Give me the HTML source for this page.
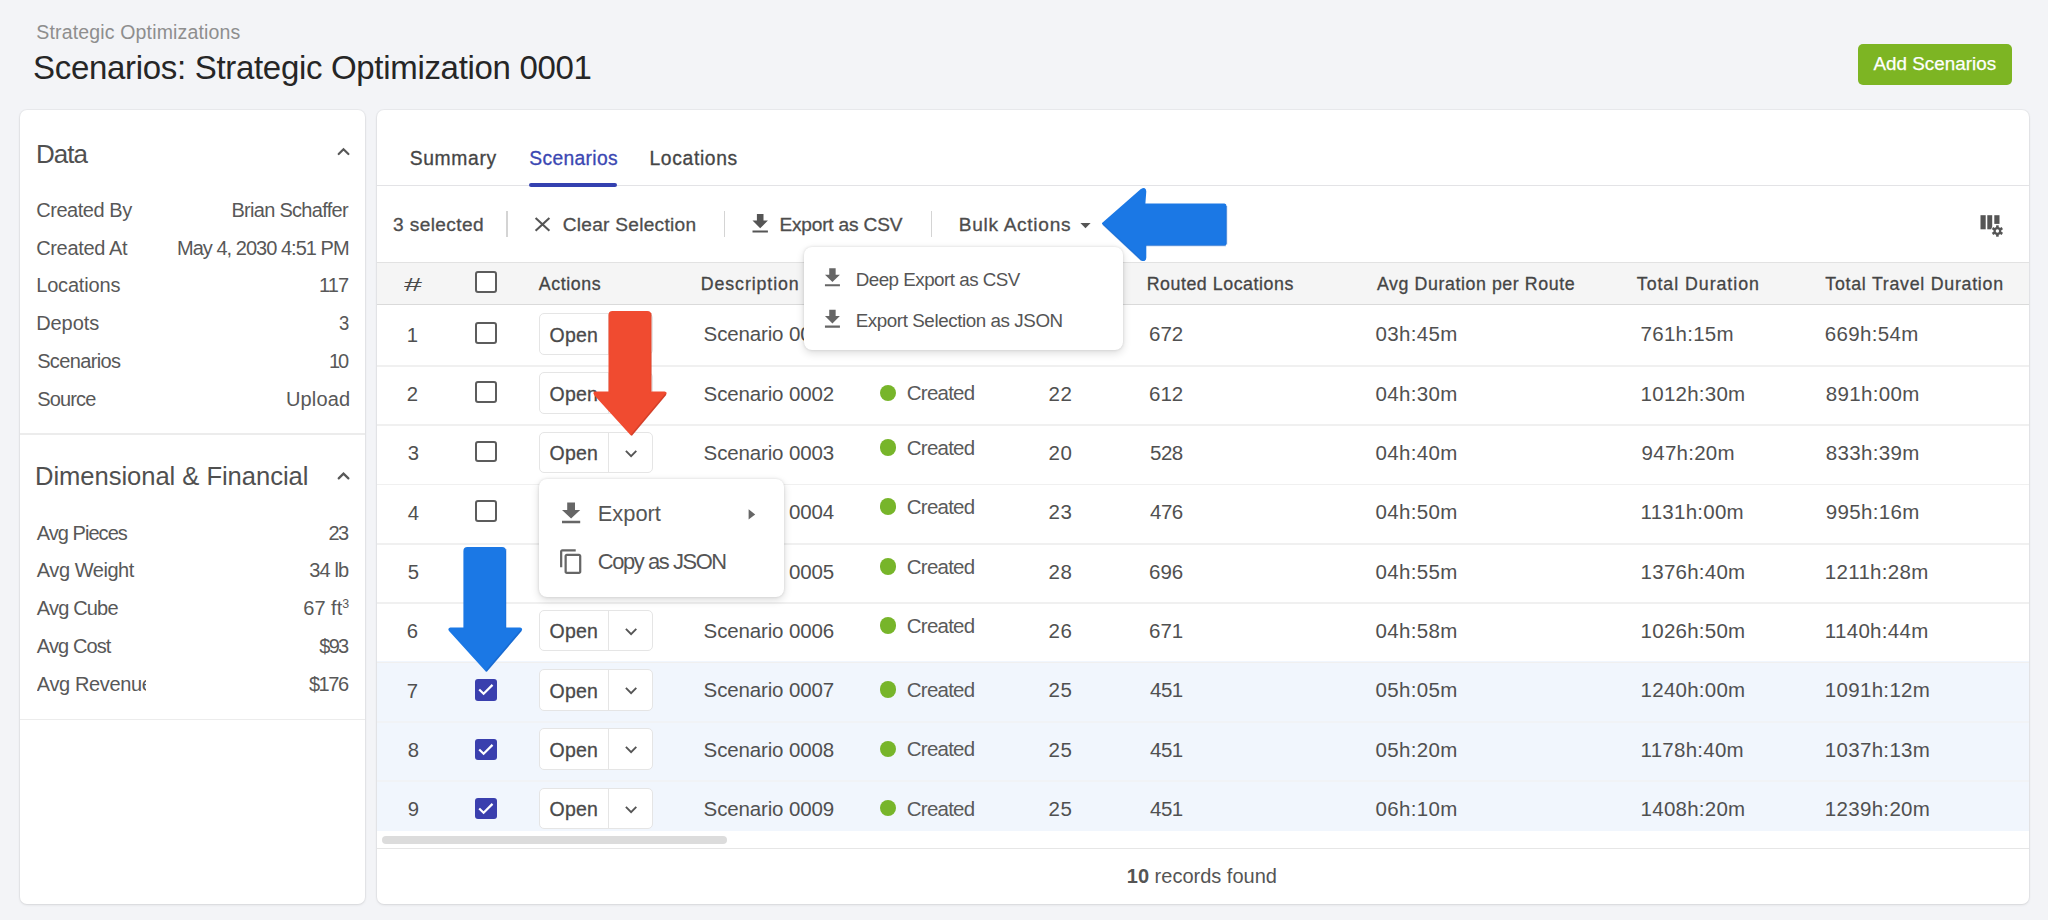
<!DOCTYPE html>
<html><head><meta charset="utf-8"><title>Scenarios</title>
<style>
html,body{margin:0;padding:0;}
body{width:2048px;height:920px;overflow:hidden;position:relative;background:#f3f4f7;font-family:"Liberation Sans",sans-serif;}
.a{position:absolute;box-sizing:border-box;}
.t{position:absolute;white-space:nowrap;line-height:1;font-family:"Liberation Sans",sans-serif;}
.cb{position:absolute;box-sizing:border-box;width:21.5px;height:21.5px;border:2.1px solid #5c5c5c;border-radius:3px;background:#fff;}
.cbk{position:absolute;box-sizing:border-box;width:21.3px;height:21.3px;border-radius:3px;background:#3a3fae;}
.btn{position:absolute;box-sizing:border-box;width:114px;height:41.6px;border:1px solid #e5e5e5;border-radius:5px;background:#fff;}
.btn:after{content:"";position:absolute;left:68.2px;top:0;bottom:0;width:1px;background:#e5e5e5;}
.dot{position:absolute;width:16.4px;height:16.4px;border-radius:50%;background:#77b52a;}
sup{font-size:0.62em;vertical-align:0;position:relative;top:-0.55em;}
</style></head><body>

<div class="a" style="left:1857.6px;top:43.8px;width:154px;height:41px;border-radius:5px;background:#7db523;"></div>
<div class="a" style="left:19.6px;top:109.8px;width:345.8px;height:794px;border-radius:7px;background:#fff;box-shadow:0 0 0 1px rgba(0,0,0,0.035),0 1px 3px rgba(0,0,0,0.09);"></div>
<div class="a" style="left:377px;top:109.8px;width:1652px;height:794px;border-radius:7px;background:#fff;box-shadow:0 0 0 1px rgba(0,0,0,0.035),0 1px 3px rgba(0,0,0,0.09);"></div>
<div class="a" style="left:20px;top:433.3px;width:345px;height:1.3px;background:#ececec;"></div>
<div class="a" style="left:20px;top:718.6px;width:345px;height:1.3px;background:#ececec;"></div>
<div class="a" style="left:377px;top:184.8px;width:1652px;height:1.2px;background:#e3e3e6;"></div>
<div class="a" style="left:529.2px;top:182.9px;width:88px;height:4px;border-radius:2px;background:#3441b0;"></div>
<div class="a" style="left:506.2px;top:211px;width:1.4px;height:26px;background:#d4d4d4;"></div>
<div class="a" style="left:723.6px;top:211px;width:1.4px;height:26px;background:#d4d4d4;"></div>
<div class="a" style="left:930.7px;top:211px;width:1.4px;height:26px;background:#d4d4d4;"></div>
<div class="a" style="left:377px;top:261.6px;width:1652px;height:43px;background:#f5f5f5;border-top:1.2px solid #e2e2e2;border-bottom:1.5px solid #dadada;"></div>
<div class="a" style="left:377px;top:661.4px;width:1652px;height:170px;background:#f1f6fd;"></div>
<div class="a" style="left:377px;top:364.90px;width:1652px;height:1.8px;background:#f0f0f0;"></div>
<div class="a" style="left:377px;top:424.23px;width:1652px;height:1.8px;background:#f0f0f0;"></div>
<div class="a" style="left:377px;top:483.56px;width:1652px;height:1.8px;background:#f0f0f0;"></div>
<div class="a" style="left:377px;top:542.89px;width:1652px;height:1.8px;background:#f0f0f0;"></div>
<div class="a" style="left:377px;top:602.22px;width:1652px;height:1.8px;background:#f0f0f0;"></div>
<div class="a" style="left:377px;top:661.55px;width:1652px;height:1.8px;background:#f0f0f0;"></div>
<div class="a" style="left:377px;top:720.88px;width:1652px;height:1.8px;background:#f1f3f6;"></div>
<div class="a" style="left:377px;top:780.21px;width:1652px;height:1.8px;background:#f1f3f6;"></div>
<div class="a" style="left:382px;top:835.5px;width:345px;height:8px;border-radius:4px;background:#dcdcdc;"></div>
<div class="a" style="left:377px;top:847.8px;width:1652px;height:1.2px;background:#e6e6e6;"></div>
<div class="cb" style="left:475.3px;top:271.1px;"></div>
<div class="cb" style="left:475.3px;top:322.14px;"></div>
<div class="btn" style="left:538.6px;top:313.14px;"><svg width="30" height="20" style="position:absolute;left:79px;top:10px"><polyline points="6.9,7.9 12.1,13.1 17.3,7.9" fill="none" stroke="#555" stroke-width="1.9"/></svg></div>
<div class="cb" style="left:475.3px;top:381.47px;"></div>
<div class="btn" style="left:538.6px;top:372.47px;"><svg width="30" height="20" style="position:absolute;left:79px;top:10px"><polyline points="6.9,7.9 12.1,13.1 17.3,7.9" fill="none" stroke="#555" stroke-width="1.9"/></svg></div>
<div class="dot" style="left:879.9px;top:384.63px;"></div>
<div class="cb" style="left:475.3px;top:440.80px;"></div>
<div class="btn" style="left:538.6px;top:431.80px;"><svg width="30" height="20" style="position:absolute;left:79px;top:10px"><polyline points="6.9,7.9 12.1,13.1 17.3,7.9" fill="none" stroke="#555" stroke-width="1.9"/></svg></div>
<div class="dot" style="left:879.9px;top:439.16px;"></div>
<div class="cb" style="left:475.3px;top:500.13px;"></div>
<div class="dot" style="left:879.9px;top:498.49px;"></div>
<div class="cb" style="left:475.3px;top:559.46px;"></div>
<div class="dot" style="left:879.9px;top:558.32px;"></div>
<div class="cb" style="left:475.3px;top:618.79px;"></div>
<div class="btn" style="left:538.6px;top:609.79px;"><svg width="30" height="20" style="position:absolute;left:79px;top:10px"><polyline points="6.9,7.9 12.1,13.1 17.3,7.9" fill="none" stroke="#555" stroke-width="1.9"/></svg></div>
<div class="dot" style="left:879.9px;top:617.45px;"></div>
<div class="cbk" style="left:475.3px;top:679.22px;"><svg width="21.3" height="21.3" style="position:absolute;left:0;top:0"><polyline points="4.2,10.5 8.6,14.8 17.5,5.9" fill="none" stroke="#fff" stroke-width="2.2"/></svg></div>
<div class="btn" style="left:538.6px;top:669.12px;"><svg width="30" height="20" style="position:absolute;left:79px;top:10px"><polyline points="6.9,7.9 12.1,13.1 17.3,7.9" fill="none" stroke="#555" stroke-width="1.9"/></svg></div>
<div class="dot" style="left:879.9px;top:681.28px;"></div>
<div class="cbk" style="left:475.3px;top:738.55px;"><svg width="21.3" height="21.3" style="position:absolute;left:0;top:0"><polyline points="4.2,10.5 8.6,14.8 17.5,5.9" fill="none" stroke="#fff" stroke-width="2.2"/></svg></div>
<div class="btn" style="left:538.6px;top:728.45px;"><svg width="30" height="20" style="position:absolute;left:79px;top:10px"><polyline points="6.9,7.9 12.1,13.1 17.3,7.9" fill="none" stroke="#555" stroke-width="1.9"/></svg></div>
<div class="dot" style="left:879.9px;top:740.61px;"></div>
<div class="cbk" style="left:475.3px;top:797.88px;"><svg width="21.3" height="21.3" style="position:absolute;left:0;top:0"><polyline points="4.2,10.5 8.6,14.8 17.5,5.9" fill="none" stroke="#fff" stroke-width="2.2"/></svg></div>
<div class="btn" style="left:538.6px;top:787.78px;"><svg width="30" height="20" style="position:absolute;left:79px;top:10px"><polyline points="6.9,7.9 12.1,13.1 17.3,7.9" fill="none" stroke="#555" stroke-width="1.9"/></svg></div>
<div class="dot" style="left:879.9px;top:799.94px;"></div>
<div class="t" style="top:22.72px;font-size:19.5px;color:#8e8e8e;letter-spacing:0.162px;left:36.30px;">Strategic Optimizations</div>
<div class="t" style="top:50.95px;font-size:33px;color:#262626;letter-spacing:-0.314px;left:33.10px;">Scenarios: Strategic Optimization 0001</div>
<div class="t" style="top:55.32px;font-size:18.8px;color:#ffffff;letter-spacing:0.053px;-webkit-text-stroke:0.25px currentColor;left:1873.40px;">Add Scenarios</div>
<div class="t" style="top:140.60px;font-size:26px;color:#505050;letter-spacing:-0.987px;left:36.00px;">Data</div>
<div class="t" style="top:199.80px;font-size:20px;color:#585858;letter-spacing:-0.450px;left:36.20px;">Created By</div>
<div class="t" style="top:199.80px;font-size:20px;color:#585858;letter-spacing:-0.716px;left:231.50px;">Brian Schaffer</div>
<div class="t" style="top:237.55px;font-size:20px;color:#585858;letter-spacing:-0.339px;left:36.20px;">Created At</div>
<div class="t" style="top:237.55px;font-size:20px;color:#585858;letter-spacing:-0.975px;left:177.00px;">May 4, 2030 4:51 PM</div>
<div class="t" style="top:275.30px;font-size:20px;color:#585858;letter-spacing:-0.177px;left:36.20px;">Locations</div>
<div class="t" style="top:275.30px;font-size:20px;color:#585858;letter-spacing:-0.931px;left:319.00px;">117</div>
<div class="t" style="top:313.05px;font-size:20px;color:#585858;letter-spacing:-0.074px;left:36.20px;">Depots</div>
<div class="t" style="top:313.05px;font-size:20px;color:#585858;left:338.75px;transform:scaleX(0.923);transform-origin:0.00px 0;">3</div>
<div class="t" style="top:350.80px;font-size:20px;color:#585858;letter-spacing:-0.654px;left:37.20px;">Scenarios</div>
<div class="t" style="top:350.80px;font-size:20px;color:#585858;letter-spacing:-2.223px;left:329.00px;">10</div>
<div class="t" style="top:388.55px;font-size:20px;color:#585858;letter-spacing:-0.849px;left:37.20px;">Source</div>
<div class="t" style="top:388.55px;font-size:20px;color:#585858;letter-spacing:0.129px;left:286.00px;">Upload</div>
<div class="t" style="top:463.94px;font-size:25.6px;color:#505050;letter-spacing:-0.053px;left:35.00px;">Dimensional &amp; Financial</div>
<div class="t" style="top:522.80px;font-size:20px;color:#585858;letter-spacing:-0.965px;left:36.80px;">Avg Pieces</div>
<div class="t" style="top:522.80px;font-size:20px;color:#585858;letter-spacing:-1.723px;left:328.60px;">23</div>
<div class="t" style="top:560.20px;font-size:20px;color:#585858;letter-spacing:-0.443px;left:36.80px;">Avg Weight</div>
<div class="t" style="top:560.20px;font-size:20px;color:#585858;letter-spacing:-0.887px;left:309.30px;">34 lb</div>
<div class="t" style="top:598.10px;font-size:20px;color:#585858;letter-spacing:-0.821px;left:36.80px;">Avg Cube</div>
<div class="t" style="top:598.10px;font-size:20px;color:#585858;right:1698.88px;">67 ft<sup>3</sup></div>
<div class="t" style="top:635.60px;font-size:20px;color:#585858;letter-spacing:-0.889px;left:36.80px;">Avg Cost</div>
<div class="t" style="top:635.60px;font-size:20px;color:#585858;letter-spacing:-1.773px;left:319.30px;">$93</div>
<div class="t" style="top:673.60px;font-size:20px;color:#585858;letter-spacing:-0.359px;left:36.80px;width:109.00px;height:26px;overflow:hidden;">Avg Revenue</div>
<div class="t" style="top:673.60px;font-size:20px;color:#585858;letter-spacing:-1.423px;left:308.90px;">$176</div>
<div class="t" style="top:148.90px;font-size:19.3px;color:#454545;letter-spacing:0.658px;-webkit-text-stroke:0.3px currentColor;left:409.70px;">Summary</div>
<div class="t" style="top:148.90px;font-size:19.3px;color:#3b47b2;letter-spacing:0.325px;-webkit-text-stroke:0.3px currentColor;left:529.30px;">Scenarios</div>
<div class="t" style="top:148.90px;font-size:19.3px;color:#454545;letter-spacing:0.650px;-webkit-text-stroke:0.3px currentColor;left:649.50px;">Locations</div>
<div class="t" style="top:215.26px;font-size:19.1px;color:#4d4d4d;letter-spacing:0.398px;-webkit-text-stroke:0.3px currentColor;left:393.00px;">3 selected</div>
<div class="t" style="top:215.26px;font-size:19.1px;color:#4d4d4d;letter-spacing:0.274px;-webkit-text-stroke:0.3px currentColor;left:562.70px;">Clear Selection</div>
<div class="t" style="top:215.26px;font-size:19.1px;color:#4d4d4d;letter-spacing:-0.182px;-webkit-text-stroke:0.3px currentColor;left:779.40px;">Export as CSV</div>
<div class="t" style="top:215.26px;font-size:19.1px;color:#4d4d4d;letter-spacing:0.699px;-webkit-text-stroke:0.3px currentColor;left:958.80px;">Bulk Actions</div>
<div class="t" style="top:275.90px;font-size:18px;color:#4a4a4a;left:404.30px;transform:scaleX(1.790);transform-origin:0.00px 0;">#</div>
<div class="t" style="top:276.07px;font-size:17.8px;color:#454545;letter-spacing:0.580px;-webkit-text-stroke:0.3px currentColor;left:538.80px;">Actions</div>
<div class="t" style="top:276.07px;font-size:17.8px;color:#454545;letter-spacing:0.895px;-webkit-text-stroke:0.3px currentColor;left:700.80px;">Description</div>
<div class="t" style="top:276.07px;font-size:17.8px;color:#454545;letter-spacing:0.546px;-webkit-text-stroke:0.3px currentColor;left:1146.70px;">Routed Locations</div>
<div class="t" style="top:276.07px;font-size:17.8px;color:#454545;letter-spacing:0.576px;-webkit-text-stroke:0.3px currentColor;left:1377.00px;">Avg Duration per Route</div>
<div class="t" style="top:276.07px;font-size:17.8px;color:#454545;letter-spacing:0.952px;-webkit-text-stroke:0.3px currentColor;left:1636.80px;">Total Duration</div>
<div class="t" style="top:276.07px;font-size:17.8px;color:#454545;letter-spacing:0.735px;-webkit-text-stroke:0.3px currentColor;left:1825.30px;">Total Travel Duration</div>
<div class="t" style="top:324.65px;font-size:20.3px;color:#505050;left:406.80px;">1</div>
<div class="t" style="top:324.48px;font-size:20.5px;color:#505050;letter-spacing:-0.142px;left:703.60px;">Scenario 0001</div>
<div class="t" style="top:324.48px;font-size:20.5px;color:#505050;letter-spacing:-0.001px;left:1149.00px;">672</div>
<div class="t" style="top:324.48px;font-size:20.5px;color:#505050;letter-spacing:0.350px;left:1375.50px;">03h:45m</div>
<div class="t" style="top:324.48px;font-size:20.5px;color:#505050;letter-spacing:0.255px;left:1640.60px;">761h:15m</div>
<div class="t" style="top:324.48px;font-size:20.5px;color:#505050;letter-spacing:0.318px;left:1824.80px;">669h:54m</div>
<div class="t" style="top:325.53px;font-size:19.5px;color:#4a4a4a;letter-spacing:0.214px;-webkit-text-stroke:0.3px currentColor;left:549.60px;">Open</div>
<div class="t" style="top:383.98px;font-size:20.3px;color:#505050;left:406.80px;">2</div>
<div class="t" style="top:383.81px;font-size:20.5px;color:#505050;letter-spacing:-0.142px;left:703.60px;">Scenario 0002</div>
<div class="t" style="top:383.20px;font-size:20.5px;color:#5a5a5a;letter-spacing:-0.772px;left:906.80px;">Created</div>
<div class="t" style="top:383.81px;font-size:20.5px;color:#505050;letter-spacing:0.599px;left:1048.40px;">22</div>
<div class="t" style="top:383.81px;font-size:20.5px;color:#505050;letter-spacing:-0.001px;left:1149.00px;">612</div>
<div class="t" style="top:383.81px;font-size:20.5px;color:#505050;letter-spacing:0.350px;left:1375.50px;">04h:30m</div>
<div class="t" style="top:383.81px;font-size:20.5px;color:#505050;letter-spacing:0.251px;left:1640.60px;">1012h:30m</div>
<div class="t" style="top:383.81px;font-size:20.5px;color:#505050;letter-spacing:0.322px;left:1825.80px;">891h:00m</div>
<div class="t" style="top:384.86px;font-size:19.5px;color:#4a4a4a;letter-spacing:0.214px;-webkit-text-stroke:0.3px currentColor;left:549.60px;">Open</div>
<div class="t" style="top:443.31px;font-size:20.3px;color:#505050;left:407.80px;">3</div>
<div class="t" style="top:443.14px;font-size:20.5px;color:#505050;letter-spacing:-0.142px;left:703.60px;">Scenario 0003</div>
<div class="t" style="top:437.74px;font-size:20.5px;color:#5a5a5a;letter-spacing:-0.772px;left:906.80px;">Created</div>
<div class="t" style="top:443.14px;font-size:20.5px;color:#505050;letter-spacing:0.599px;left:1048.40px;">20</div>
<div class="t" style="top:443.14px;font-size:20.5px;color:#505050;letter-spacing:-0.501px;left:1150.00px;">528</div>
<div class="t" style="top:443.14px;font-size:20.5px;color:#505050;letter-spacing:0.350px;left:1375.50px;">04h:40m</div>
<div class="t" style="top:443.14px;font-size:20.5px;color:#505050;letter-spacing:0.257px;left:1641.60px;">947h:20m</div>
<div class="t" style="top:443.14px;font-size:20.5px;color:#505050;letter-spacing:0.322px;left:1825.80px;">833h:39m</div>
<div class="t" style="top:444.19px;font-size:19.5px;color:#4a4a4a;letter-spacing:0.214px;-webkit-text-stroke:0.3px currentColor;left:549.60px;">Open</div>
<div class="t" style="top:502.63px;font-size:20.3px;color:#505050;left:407.80px;">4</div>
<div class="t" style="top:502.46px;font-size:20.5px;color:#505050;letter-spacing:-0.142px;left:703.60px;">Scenario 0004</div>
<div class="t" style="top:497.06px;font-size:20.5px;color:#5a5a5a;letter-spacing:-0.772px;left:906.80px;">Created</div>
<div class="t" style="top:502.46px;font-size:20.5px;color:#505050;letter-spacing:0.599px;left:1048.40px;">23</div>
<div class="t" style="top:502.46px;font-size:20.5px;color:#505050;letter-spacing:-0.501px;left:1150.00px;">476</div>
<div class="t" style="top:502.46px;font-size:20.5px;color:#505050;letter-spacing:0.350px;left:1375.50px;">04h:50m</div>
<div class="t" style="top:502.46px;font-size:20.5px;color:#505050;letter-spacing:0.247px;left:1640.60px;">1131h:00m</div>
<div class="t" style="top:502.46px;font-size:20.5px;color:#505050;letter-spacing:0.322px;left:1825.80px;">995h:16m</div>
<div class="t" style="top:561.97px;font-size:20.3px;color:#505050;left:407.80px;">5</div>
<div class="t" style="top:561.80px;font-size:20.5px;color:#505050;letter-spacing:-0.142px;left:703.60px;">Scenario 0005</div>
<div class="t" style="top:556.90px;font-size:20.5px;color:#5a5a5a;letter-spacing:-0.772px;left:906.80px;">Created</div>
<div class="t" style="top:561.80px;font-size:20.5px;color:#505050;letter-spacing:0.599px;left:1048.40px;">28</div>
<div class="t" style="top:561.80px;font-size:20.5px;color:#505050;letter-spacing:-0.001px;left:1149.00px;">696</div>
<div class="t" style="top:561.80px;font-size:20.5px;color:#505050;letter-spacing:0.350px;left:1375.50px;">04h:55m</div>
<div class="t" style="top:561.80px;font-size:20.5px;color:#505050;letter-spacing:0.251px;left:1640.60px;">1376h:40m</div>
<div class="t" style="top:561.80px;font-size:20.5px;color:#505050;letter-spacing:0.309px;left:1824.80px;">1211h:28m</div>
<div class="t" style="top:621.30px;font-size:20.3px;color:#505050;left:406.80px;">6</div>
<div class="t" style="top:621.13px;font-size:20.5px;color:#505050;letter-spacing:-0.142px;left:703.60px;">Scenario 0006</div>
<div class="t" style="top:616.03px;font-size:20.5px;color:#5a5a5a;letter-spacing:-0.772px;left:906.80px;">Created</div>
<div class="t" style="top:621.13px;font-size:20.5px;color:#505050;letter-spacing:0.599px;left:1048.40px;">26</div>
<div class="t" style="top:621.13px;font-size:20.5px;color:#505050;letter-spacing:-0.001px;left:1149.00px;">671</div>
<div class="t" style="top:621.13px;font-size:20.5px;color:#505050;letter-spacing:0.350px;left:1375.50px;">04h:58m</div>
<div class="t" style="top:621.13px;font-size:20.5px;color:#505050;letter-spacing:0.251px;left:1640.60px;">1026h:50m</div>
<div class="t" style="top:621.13px;font-size:20.5px;color:#505050;letter-spacing:0.309px;left:1824.80px;">1140h:44m</div>
<div class="t" style="top:622.18px;font-size:19.5px;color:#4a4a4a;letter-spacing:0.214px;-webkit-text-stroke:0.3px currentColor;left:549.60px;">Open</div>
<div class="t" style="top:680.62px;font-size:20.3px;color:#505050;left:406.80px;">7</div>
<div class="t" style="top:680.46px;font-size:20.5px;color:#505050;letter-spacing:-0.142px;left:703.60px;">Scenario 0007</div>
<div class="t" style="top:679.86px;font-size:20.5px;color:#5a5a5a;letter-spacing:-0.772px;left:906.80px;">Created</div>
<div class="t" style="top:680.46px;font-size:20.5px;color:#505050;letter-spacing:0.599px;left:1048.40px;">25</div>
<div class="t" style="top:680.46px;font-size:20.5px;color:#505050;letter-spacing:-0.501px;left:1150.00px;">451</div>
<div class="t" style="top:680.46px;font-size:20.5px;color:#505050;letter-spacing:0.350px;left:1375.50px;">05h:05m</div>
<div class="t" style="top:680.46px;font-size:20.5px;color:#505050;letter-spacing:0.251px;left:1640.60px;">1240h:00m</div>
<div class="t" style="top:680.46px;font-size:20.5px;color:#505050;letter-spacing:0.314px;left:1824.80px;">1091h:12m</div>
<div class="t" style="top:681.50px;font-size:19.5px;color:#4a4a4a;letter-spacing:0.214px;-webkit-text-stroke:0.3px currentColor;left:549.60px;">Open</div>
<div class="t" style="top:739.96px;font-size:20.3px;color:#505050;left:407.80px;">8</div>
<div class="t" style="top:739.79px;font-size:20.5px;color:#505050;letter-spacing:-0.142px;left:703.60px;">Scenario 0008</div>
<div class="t" style="top:739.19px;font-size:20.5px;color:#5a5a5a;letter-spacing:-0.772px;left:906.80px;">Created</div>
<div class="t" style="top:739.79px;font-size:20.5px;color:#505050;letter-spacing:0.599px;left:1048.40px;">25</div>
<div class="t" style="top:739.79px;font-size:20.5px;color:#505050;letter-spacing:-0.501px;left:1150.00px;">451</div>
<div class="t" style="top:739.79px;font-size:20.5px;color:#505050;letter-spacing:0.350px;left:1375.50px;">05h:20m</div>
<div class="t" style="top:739.79px;font-size:20.5px;color:#505050;letter-spacing:0.247px;left:1640.60px;">1178h:40m</div>
<div class="t" style="top:739.79px;font-size:20.5px;color:#505050;letter-spacing:0.314px;left:1824.80px;">1037h:13m</div>
<div class="t" style="top:740.84px;font-size:19.5px;color:#4a4a4a;letter-spacing:0.214px;-webkit-text-stroke:0.3px currentColor;left:549.60px;">Open</div>
<div class="t" style="top:799.29px;font-size:20.3px;color:#505050;left:407.80px;">9</div>
<div class="t" style="top:799.12px;font-size:20.5px;color:#505050;letter-spacing:-0.142px;left:703.60px;">Scenario 0009</div>
<div class="t" style="top:798.52px;font-size:20.5px;color:#5a5a5a;letter-spacing:-0.772px;left:906.80px;">Created</div>
<div class="t" style="top:799.12px;font-size:20.5px;color:#505050;letter-spacing:0.599px;left:1048.40px;">25</div>
<div class="t" style="top:799.12px;font-size:20.5px;color:#505050;letter-spacing:-0.501px;left:1150.00px;">451</div>
<div class="t" style="top:799.12px;font-size:20.5px;color:#505050;letter-spacing:0.350px;left:1375.50px;">06h:10m</div>
<div class="t" style="top:799.12px;font-size:20.5px;color:#505050;letter-spacing:0.251px;left:1640.60px;">1408h:20m</div>
<div class="t" style="top:799.12px;font-size:20.5px;color:#505050;letter-spacing:0.314px;left:1824.80px;">1239h:20m</div>
<div class="t" style="top:800.17px;font-size:19.5px;color:#4a4a4a;letter-spacing:0.214px;-webkit-text-stroke:0.3px currentColor;left:549.60px;">Open</div>
<div class="t" style="top:865.50px;font-size:20px;color:#555;left:1126.80px;"><b style="font-weight:700">10</b> records found</div>
<div class="t" style="top:270.62px;font-size:18.8px;color:#555;letter-spacing:-0.509px;left:855.70px;z-index:11;">Deep Export as CSV</div>
<div class="t" style="top:312.02px;font-size:18.8px;color:#555;letter-spacing:-0.420px;left:855.70px;z-index:11;">Export Selection as JSON</div>
<div class="t" style="top:503.28px;font-size:21.9px;color:#555;letter-spacing:-0.037px;left:597.80px;z-index:11;">Export</div>
<div class="t" style="top:550.59px;font-size:21.9px;color:#555;letter-spacing:-1.405px;left:597.80px;z-index:11;">Copy as JSON</div>
<div class="a" style="z-index:10;left:804px;top:247px;width:319px;height:103.4px;border-radius:8px;background:#fff;box-shadow:0 0 3px rgba(0,0,0,0.13),0 3px 9px rgba(0,0,0,0.14);"></div>
<div class="a" style="z-index:10;left:538.7px;top:478.9px;width:245px;height:118.4px;border-radius:8px;background:#fff;box-shadow:0 0 3px rgba(0,0,0,0.13),0 3px 9px rgba(0,0,0,0.14);"></div>
<svg class="a" style="z-index:11;left:0;top:0;pointer-events:none" width="2048" height="920" viewBox="0 0 2048 920">
<path transform="translate(747,210.6) scale(1.1)" d="M5 20h14v-2H5v2zM19 9h-4V3H9v6H5l7 7 7-7z" fill="#555"/>
<path transform="translate(819.6,265.1) scale(1.07,1.06)" d="M5 20h14v-2H5v2zM19 9h-4V3H9v6H5l7 7 7-7z" fill="#666"/>
<path transform="translate(819.6,306.5) scale(1.07,1.06)" d="M5 20h14v-2H5v2zM19 9h-4V3H9v6H5l7 7 7-7z" fill="#666"/>
<path transform="translate(555.5,498.9) scale(1.3,1.22)" d="M5 20h14v-2H5v2zM19 9h-4V3H9v6H5l7 7 7-7z" fill="#666"/>
<path transform="translate(557.8,548) scale(1.12,1.127)" d="M16 1H4c-1.1 0-2 .9-2 2v14h2V3h12V1zm3 4H8c-1.1 0-2 .9-2 2v14c0 1.1.9 2 2 2h11c1.1 0 2-.9 2-2V7c0-1.1-.9-2-2-2zm0 16H8V7h11v14z" fill="#666"/>
<polygon points="748.6,509.3 755.2,514.45 748.6,519.6" fill="#666"/>
<polygon points="1080.4,222.9 1090.6,222.9 1085.5,228.2" fill="#555"/>
<path d="M535.6,218 L549.4,230.8 M549.4,218 L535.6,230.8" stroke="#555" stroke-width="2.1" fill="none"/>
<polyline points="338.7,154 343.5,149.2 348.4,154" fill="none" stroke="#585858" stroke-width="2.2" stroke-linecap="round"/>
<polyline points="338.7,478.4 343.5,473.6 348.4,478.4" fill="none" stroke="#585858" stroke-width="2.2" stroke-linecap="round"/>
<rect x="1980.5" y="215.2" width="5.2" height="14.1" fill="#555"/>
<rect x="1987.3" y="215.2" width="4.9" height="14.1" fill="#555"/>
<rect x="1994.3" y="215.2" width="5.2" height="8.7" fill="#555"/>
<circle cx="1997.4" cy="231" r="6.6" fill="#fff"/>
<rect x="1996.1" y="225.3" width="2.6" height="3" transform="rotate(0 1997.4 231)" fill="#555"/><rect x="1996.1" y="225.3" width="2.6" height="3" transform="rotate(60 1997.4 231)" fill="#555"/><rect x="1996.1" y="225.3" width="2.6" height="3" transform="rotate(120 1997.4 231)" fill="#555"/><rect x="1996.1" y="225.3" width="2.6" height="3" transform="rotate(180 1997.4 231)" fill="#555"/><rect x="1996.1" y="225.3" width="2.6" height="3" transform="rotate(240 1997.4 231)" fill="#555"/><rect x="1996.1" y="225.3" width="2.6" height="3" transform="rotate(300 1997.4 231)" fill="#555"/>
<circle cx="1997.4" cy="231" r="3.9" fill="#555"/><circle cx="1997.4" cy="231" r="1.7" fill="#fff"/>
</svg>
<svg class="a" style="z-index:20;left:0;top:0;pointer-events:none" width="2048" height="920" viewBox="0 0 2048 920">
<path d="M1103,223.5 L1141.5,189.8 Q1145.3,187.8 1145.3,191.5 L1144.3,204.5 L1224.5,204.5 Q1225.5,204.5 1225.5,206 L1225.5,243.5 Q1225.5,244.6 1224.5,244.6 L1145.3,244.6 L1145.3,257.5 Q1145.3,261 1141.5,259.5 Z" fill="#1b78e5" stroke="#1b78e5" stroke-width="2" stroke-linejoin="round"/>
<path d="M609.5,315 Q609.5,312 612.5,312 L647.3,312 Q650.3,312 650.3,315 L650.3,392.4 L664.5,392.4 Q666.5,392.6 665,394.5 L631.4,434.5 L595,394.5 Q593.5,392.6 595.5,392.4 L609.5,392.4 Z" fill="#f04b30" stroke="#f04b30" stroke-width="2" stroke-linejoin="round"/>
<path d="M464.4,551 Q464.4,548 467.4,548 L502,548 Q505,548 505,551 L505,628.5 L520,628.5 Q522,628.7 520.5,630.6 L486.3,670.7 L450,630.6 Q448.5,628.7 450.5,628.5 L464.4,628.5 Z" fill="#1b78e5" stroke="#1b78e5" stroke-width="2" stroke-linejoin="round"/>
<path d="M521,630.5 L486.3,671.2" stroke="#155fc0" stroke-width="1.6" opacity="0.55" fill="none"/>
<path d="M506,549 L506,628" stroke="#155fc0" stroke-width="1.2" opacity="0.35" fill="none"/>
<path d="M665.8,394.3 L631.4,435.2" stroke="#b8321f" stroke-width="1.6" opacity="0.5" fill="none"/>
<path d="M651.3,313 L651.3,391.5" stroke="#b8321f" stroke-width="1.2" opacity="0.35" fill="none"/>
<path d="M1226.5,206 L1226.5,244.5 M1146,245.6 L1226,245.6" stroke="#155fc0" stroke-width="1.4" opacity="0.45" fill="none"/>
<path d="M1103,224.5 L1141.5,260.6" stroke="#155fc0" stroke-width="1.4" opacity="0.4" fill="none"/>
</svg>
</body></html>
